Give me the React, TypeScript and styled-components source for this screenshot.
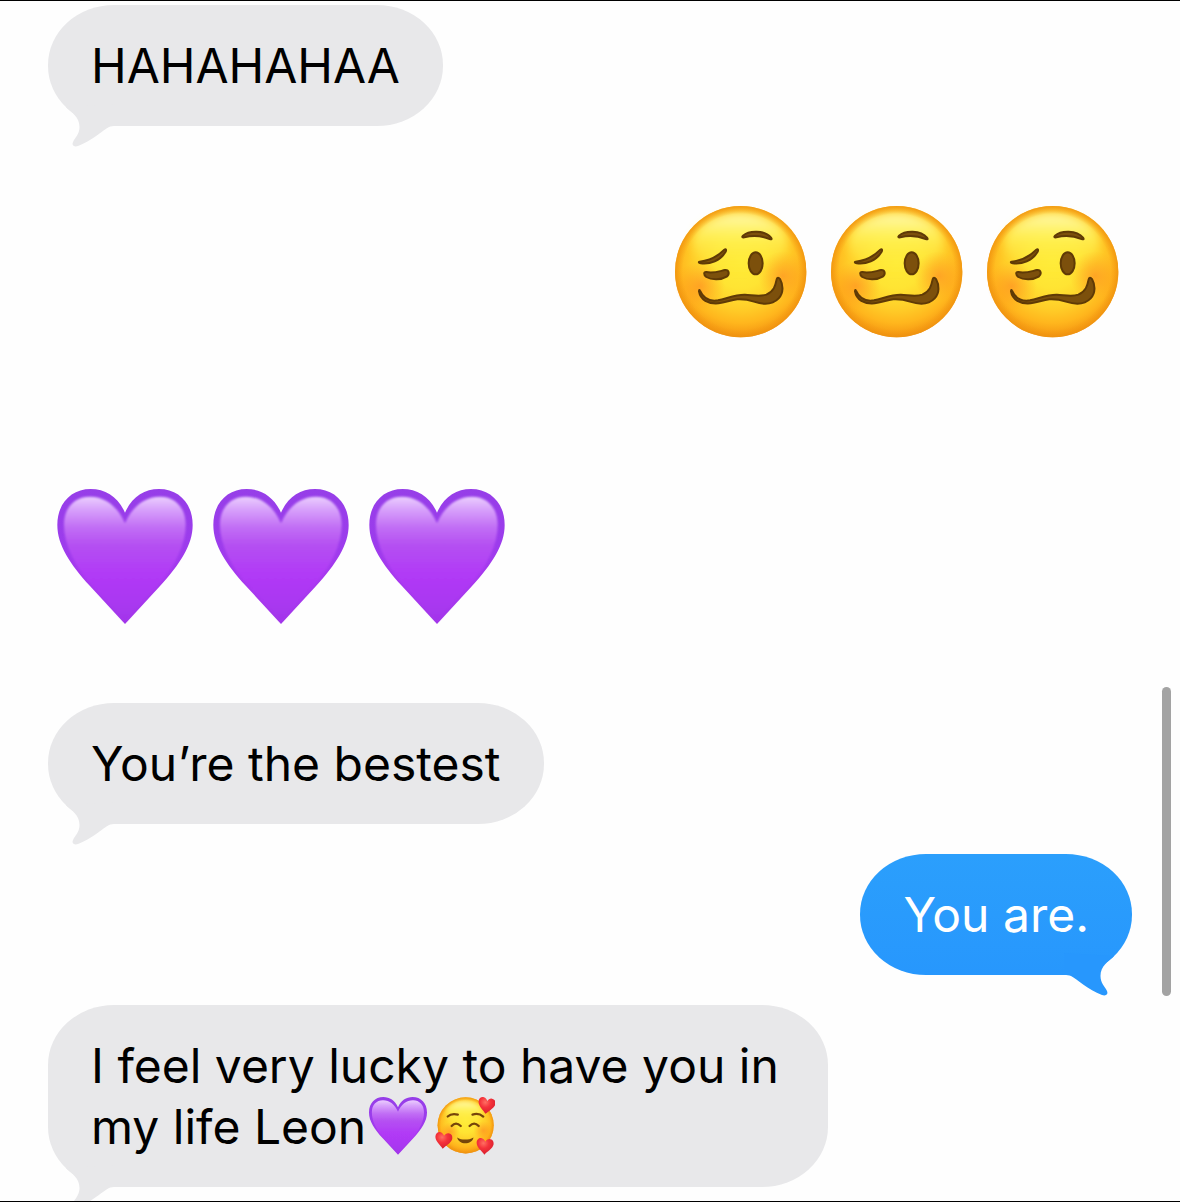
import React from "react";
import styled, { createGlobalStyle, css } from "styled-components";

const GlobalStyle = createGlobalStyle`
  *, *::before, *::after { box-sizing: border-box; }
  body { margin: 0; background: #fefefe; }
`;

const Screen = styled.main`
  position: relative;
  height: 100vh;
  overflow: hidden;
  background: #fefefe;
  border-top: 1px solid #000;
  border-bottom: 1px solid #000;
  font-family: Inter, "Liberation Sans", sans-serif;
`;

const Thread = styled.ol`
  display: flex;
  flex-direction: column;
  gap: 30px;
  margin: 0;
  padding: 4px 48px 0;
  list-style: none;
`;

const Message = styled.li<{ $sent?: boolean }>`
  display: flex;
  justify-content: ${(p) => (p.$sent ? "flex-end" : "flex-start")};
`;

const EmojiMessage = styled(Message)`
  padding: 38px 0;

  & + & {
    margin-top: 23px;
  }
`;

const Bubble = styled.div<{ $sent?: boolean }>`
  position: relative;
  max-width: 72%;
  padding: 31px 43px 30px;
  border-radius: 66px / 60px;
  font-size: 48px;
  line-height: 60px;
  ${(p) =>
    p.$sent
      ? css`
          background: linear-gradient(#2b9ffc, #2797fd);
          color: #fff;
        `
      : css`
          background: #e8e8ea;
          color: #000;
        `}
`;

const TailShape = styled.svg<{ $sent?: boolean }>`
  position: absolute;
  bottom: -22px;
  ${(p) =>
    p.$sent
      ? css`
          right: 0;
          transform: scaleX(-1);
          fill: #2797fd;
        `
      : css`
          left: 0;
          fill: #e8e8ea;
        `}
`;

const BigEmoji = styled.svg`
  display: block;
  width: 156px;
  height: 156px;
`;

const InlineEmoji = styled.svg`
  width: 60px;
  height: 60px;
  margin: 0 5px 0 2px;
  vertical-align: -12px;
`;

const ScrollThumb = styled.div`
  position: absolute;
  top: 686px;
  right: 9px;
  width: 9px;
  height: 309px;
  border-radius: 5px;
  background: #a3a3a3;
`;

const Paints = styled.svg`
  position: absolute;
  width: 0;
  height: 0;
`;

const HEART =
  "M255 432L150 318C90 252 52 195 52 135C52 70 94 27 152 27C197 27 234 51 255 98C276 51 312 27 357 27C416 27 458 70 458 135C458 195 420 252 360 318Z";
const HEART_INNER =
  "M255 425L158 318C102 257 72 190 72 135C72 83 103 50 150 50C196 50 234 80 255 130C276 80 314 50 360 50C406 50 437 83 437 135C437 190 408 257 352 318Z";
const SMALL_HEART =
  "M0 24C-8 14 -25 3 -26 -10C-27 -22 -19 -27 -12 -26C-6 -25 -2 -21 0 -16C3 -21 7 -25 13 -25C20 -25 27 -20 26 -9C24 4 8 14 0 24Z";

function SharedPaints() {
  return (
    <Paints aria-hidden="true">
      <defs>
        <linearGradient id="heartBody" x1="0" y1="0" x2="0" y2="1">
          <stop offset="0" stopColor="#963ee8" />
          <stop offset="0.4" stopColor="#9c3cec" />
          <stop offset="0.65" stopColor="#a739ee" />
          <stop offset="1" stopColor="#a236ea" />
        </linearGradient>
        <linearGradient id="heartGloss" x1="0" y1="0" x2="0" y2="1">
          <stop offset="0" stopColor="#eacdfe" />
          <stop offset="0.1" stopColor="#d8a2fb" />
          <stop offset="0.24" stopColor="#c270f5" />
          <stop offset="0.38" stopColor="#b551f2" />
          <stop offset="0.62" stopColor="#b13af6" />
          <stop offset="0.82" stopColor="#ab38f2" />
          <stop offset="1" stopColor="#a236ea" />
        </linearGradient>
        <filter id="soften" x="-10%" y="-10%" width="120%" height="120%">
          <feGaussianBlur stdDeviation="3" />
        </filter>
        <filter id="glow" x="-20%" y="-20%" width="140%" height="140%">
          <feGaussianBlur stdDeviation="12" />
        </filter>
        <filter id="smallGlow" x="-20%" y="-20%" width="140%" height="140%">
          <feGaussianBlur stdDeviation="6" />
        </filter>
        <radialGradient id="faceBody" cx="0.5" cy="0.42" r="0.59">
          <stop offset="0" stopColor="#ffec38" />
          <stop offset="0.35" stopColor="#ffe433" />
          <stop offset="0.62" stopColor="#ffcd28" />
          <stop offset="0.8" stopColor="#ffb61d" />
          <stop offset="0.93" stopColor="#f79d14" />
          <stop offset="1" stopColor="#e8860f" />
        </radialGradient>
        <linearGradient id="faceGloss" x1="0" y1="0" x2="0" y2="1">
          <stop offset="0" stopColor="#fffab0" stopOpacity="1" />
          <stop offset="0.4" stopColor="#fff45c" stopOpacity="0.8" />
          <stop offset="1" stopColor="#ffe838" stopOpacity="0" />
        </linearGradient>
        <radialGradient id="cheek">
          <stop offset="0" stopColor="#ff8020" stopOpacity="0.55" />
          <stop offset="0.5" stopColor="#ff8a1c" stopOpacity="0.3" />
          <stop offset="1" stopColor="#ff9a1c" stopOpacity="0" />
        </radialGradient>
        <radialGradient id="rim" cx="0.5" cy="0.5" r="0.5">
          <stop offset="0.88" stopColor="#f39a12" stopOpacity="0" />
          <stop offset="1" stopColor="#f0940f" stopOpacity="0.85" />
        </radialGradient>
        <radialGradient id="redHeart" cx="0.4" cy="0.3" r="0.8">
          <stop offset="0" stopColor="#ff6f62" />
          <stop offset="0.4" stopColor="#f5323a" />
          <stop offset="1" stopColor="#cf1a2c" />
        </radialGradient>
      </defs>
    </Paints>
  );
}

function HeartDrawing() {
  return (
    <>
      <path d={HEART} fill="url(#heartBody)" />
      <path d={HEART_INNER} fill="url(#heartGloss)" filter="url(#soften)" />
    </>
  );
}

function WoozyFace() {
  return (
    <BigEmoji viewBox="12 12 468 468" role="img" aria-label="Woozy face">
      <circle cx="242" cy="245" r="197" fill="url(#faceBody)" />
      <ellipse cx="240" cy="158" rx="142" ry="88" fill="url(#faceGloss)" filter="url(#glow)" />
      <circle cx="120" cy="288" r="75" fill="url(#cheek)" />
      <circle cx="368" cy="258" r="75" fill="url(#cheek)" />
      <circle cx="242" cy="245" r="197" fill="url(#rim)" />
      <g fill="#7c500c" stroke="#5f3a06" strokeWidth="6" strokeLinejoin="round">
        <path d="M249 137C266 121 314 119 333 143C337 148 334 149 329 147C304 137 275 136 253 142C247 143 245 141 249 137Z" />
        <ellipse cx="287" cy="220" rx="21" ry="33" />
        <path d="M119 215C148 212 174 198 193 179C198 175 200 180 196 187C181 211 151 224 122 220C116 219 115 216 119 215Z" />
        <path d="M139 246C159 251 177 244 195 240C207 239 210 252 200 260C184 270 155 271 139 261C130 254 131 245 139 246Z" />
        <path d="M120 302C130 325 149 335 174 331C202 325 228 313 255 314C282 316 300 321 319 314C342 304 346 287 350 268C351 262 356 262 360 267C370 285 371 309 356 325C339 343 310 344 282 335C264 329 250 327 232 328C212 330 196 338 176 340C144 343 121 329 117 304C117 299 119 299 120 302Z" />
      </g>
    </BigEmoji>
  );
}

function PurpleHeart() {
  return (
    <BigEmoji viewBox="24 -3 468 468" role="img" aria-label="Purple heart">
      <HeartDrawing />
    </BigEmoji>
  );
}

function SmilingFaceWithHearts() {
  return (
    <InlineEmoji viewBox="226 32 184 184" role="img" aria-label="Smiling face with hearts">
      <circle cx="320" cy="122" r="86" fill="url(#faceBody)" />
      <ellipse cx="316" cy="84" rx="56" ry="36" fill="url(#faceGloss)" filter="url(#smallGlow)" />
      <circle cx="272" cy="142" r="30" fill="url(#cheek)" />
      <circle cx="374" cy="138" r="30" fill="url(#cheek)" />
      <circle cx="320" cy="122" r="86" fill="url(#rim)" />
      <g fill="none" stroke="#76450a" strokeWidth="7" strokeLinecap="round">
        <path d="M265 95Q276 84 296 89" />
        <path d="M341 89Q360 83 374 95" />
        <path d="M277 124Q290 109 305 124" />
        <path d="M332 124Q346 109 360 124" />
      </g>
      <path d="M294 159C308 168 328 168 344 159C341 181 299 184 294 159Z" fill="#76450a" />
      <g fill="url(#redHeart)">
        <path d={SMALL_HEART} transform="translate(384 63) rotate(8)" />
        <path d={SMALL_HEART} transform="translate(252 170) rotate(6)" />
        <path d={SMALL_HEART} transform="translate(379 188) rotate(4)" />
      </g>
    </InlineEmoji>
  );
}

function Tail({ sent }: { sent?: boolean }) {
  return (
    <TailShape $sent={sent} width="70" height="52" viewBox="0 0 70 52" aria-hidden="true">
      <path d="M18 11C24 17 31.5 21 31.5 31C31.5 38 27 42 25.5 45C23 49 26 51.5 30 50C44 45 55 34 61 31C63 30 65 30 68 30V8Z" />
    </TailShape>
  );
}

function TextMessage({ sent, children }: { sent?: boolean; children: React.ReactNode }) {
  return (
    <Message $sent={sent}>
      <Bubble $sent={sent}>
        <Tail sent={sent} />
        {children}
      </Bubble>
    </Message>
  );
}

export default function App() {
  return (
    <Screen>
      <GlobalStyle />
      <SharedPaints />
      <Thread>
        <TextMessage>HAHAHAHAA</TextMessage>
        <EmojiMessage $sent>
          <WoozyFace />
          <WoozyFace />
          <WoozyFace />
        </EmojiMessage>
        <EmojiMessage>
          <PurpleHeart />
          <PurpleHeart />
          <PurpleHeart />
        </EmojiMessage>
        <TextMessage>You’re the bestest</TextMessage>
        <TextMessage sent>You are.</TextMessage>
        <TextMessage>
          I feel very lucky to have you in my life Leon
          <InlineEmoji viewBox="45 20 420 420" role="img" aria-label="Purple heart">
            <HeartDrawing />
          </InlineEmoji>
          <SmilingFaceWithHearts />
        </TextMessage>
      </Thread>
      <ScrollThumb />
    </Screen>
  );
}
